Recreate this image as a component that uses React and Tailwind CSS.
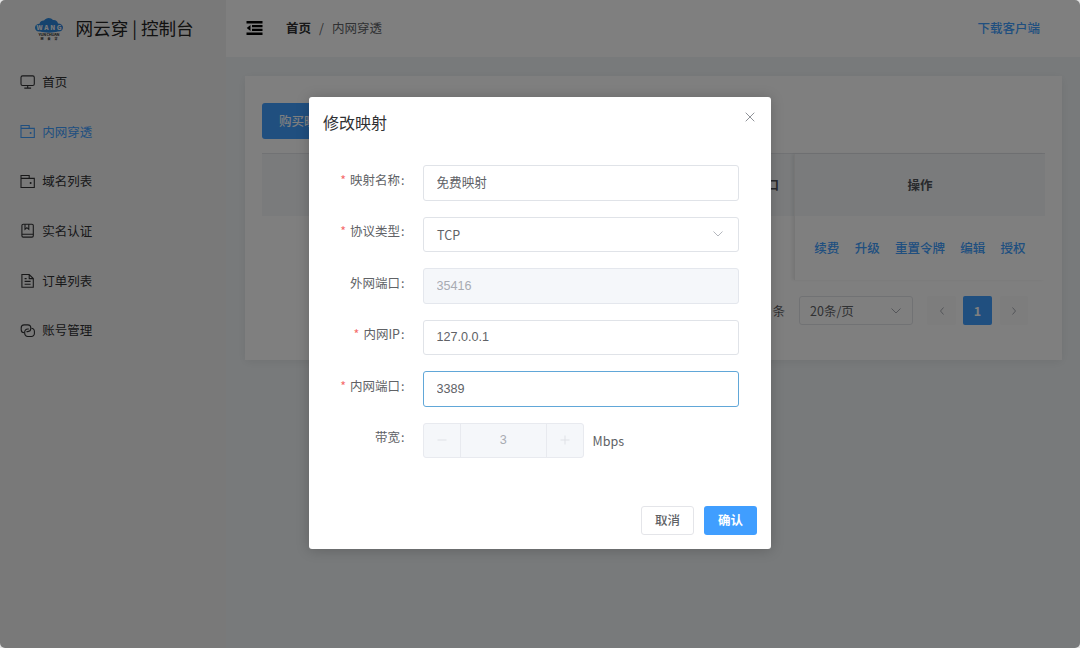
import { useState } from "react";
import clsx from "clsx";

const MENU = [
  { name: "首页", icon: "monitor" },
  { name: "内网穿透", icon: "wallet" },
  { name: "域名列表", icon: "wallet" },
  { name: "实名认证", icon: "notebook" },
  { name: "订单列表", icon: "document" },
  { name: "账号管理", icon: "link" },
];

const ICONS = {
  monitor: (
    <>
      <rect x="1" y="1.9" width="13.3" height="9.6" rx="1.6" />
      <path d="M7.7 11.500v2.200M4.300 14.100h6.800" />
    </>
  ),
  wallet: (
    <>
      <path d="M1 13.500V1.500h8.200v2.900M1 4.400h13.300v9.100H1z" />
      <circle cx="10.600" cy="9" r="1" fill="currentColor" stroke="none" />
    </>
  ),
  notebook: (
    <>
      <rect x="1.900" y="1.300" width="11.400" height="12.800" rx="1.300" />
      <path d="M1.900 11.300h11.400M5 1.300v5l1.900-1.600 1.900 1.600v-5" />
    </>
  ),
  document: (
    <>
      <path d="M9.200 1.500H1.900v12.800h11.400V5.600zM9.200 1.500v4.100h4.100" />
      <path d="M4.600 5.600h2M4.600 8.400h6M4.600 11.200h6" />
    </>
  ),
  link: (
    <>
      <path d="M4.400 9.700H4.200A3 3 0 0 1 1.200 6.700V4.900a3 3 0 0 1 3-3h3.600a3 3 0 0 1 3 3v.7a3 3 0 0 1-3 3H6.500" />
      <path d="M11.400 5.300a3 3 0 0 1 3 3v2.200a3 3 0 0 1-3 3H7.700a3 3 0 0 1-3-3V9a3 3 0 0 1 3-3h1.100" />
    </>
  ),
};

function MenuIcon({ name }) {
  return (
    <svg className="w-4 h-4 shrink-0" viewBox="0 0 16 16" fill="none" stroke="currentColor" strokeWidth="1.1">
      {ICONS[name]}
    </svg>
  );
}

function Chevron({ d = "M1.500 3.500l4.500 4.500 4.500-4.500", className }) {
  return (
    <svg className={clsx("w-3 h-3 shrink-0", className)} viewBox="0 0 12 12" fill="none" stroke="currentColor">
      <path d={d} />
    </svg>
  );
}

function Logo() {
  return (
    <svg className="w-[30px] h-6" viewBox="0 0 30 24">
      <path
        fill="#2b86dd"
        d="M6 14.500C2.500 15 1 12.500 1 10.500C1 8 3.500 6.800 5.500 6.800C6 4 8.500 3.300 10 3.500C12 .2 17 .2 19 3C21.500 2.500 23.500 4 24 6.500C27 6.500 29 8.300 29 10.500C29 13 27 14.800 24 14.500C19 16 11 16 6 14.500Z"
      />
      <text x="15" y="12.800" textAnchor="middle" textLength="25" fontSize="6.500" fontWeight="900" fill="#f4f4f4">WANG</text>
      <text x="15" y="18.800" textAnchor="middle" textLength="21" fontSize="4" fontWeight="700" fill="#333">YUN CHUAN</text>
      <text x="15" y="23" textAnchor="middle" textLength="17" fontSize="3" fontWeight="700" fill="#222">网 云 穿</text>
    </svg>
  );
}

function Sidebar({ active }) {
  return (
    <aside className="w-[226px] shrink-0 bg-[#f3f3f3]">
      <div className="h-[57px] flex items-center pl-[34px] gap-[11.500px] text-[#222]">
        <Logo />
        <span className="text-[17.600px] whitespace-nowrap">网云穿 | 控制台</span>
      </div>
      <nav className="pt-[0.400px]">
        {MENU.map((item) => (
          <div
            key={item.name}
            className={clsx(
              "h-[49.700px] flex items-center pl-5 gap-[6.300px]",
              item.name === active ? "text-[#409eff]" : "text-[#303133]"
            )}
          >
            <MenuIcon name={item.icon} />
            <span>{item.name}</span>
          </div>
        ))}
      </nav>
    </aside>
  );
}

function Header() {
  return (
    <header className="h-[57px] shrink-0 bg-white flex items-center pl-5 pr-10">
      <svg className="w-[17px] h-[14px] mb-px" viewBox="0 0 17 14" fill="#000">
        <path d="M.5 0h16v2.500H.5zM6 3.900h10.500v2.400H6zM6 7.700h10.500v2.400H6zM.5 11.500h16V14H.5zM4.500 4v6L.7 7z" />
      </svg>
      <span className="ml-[23px] font-bold text-[#303133]">首页</span>
      <span className="mx-2 text-[#606266]">/</span>
      <span className="text-[#606266]">内网穿透</span>
      <span className="ml-auto text-[#409eff] font-medium">下载客户端</span>
    </header>
  );
}

function MappingTable() {
  return (
    <div className="mt-[14px] mr-[17px] flex border-t border-[#e2e4e8]">
      <div className="flex-1 min-w-0">
        <div className="h-[62px] bg-[#f4f7f9] flex items-center justify-end pr-[15px] font-bold text-[#505458]">内网端口</div>
        <div className="h-[64px]" />
      </div>
      <div className="w-[251px] border-l border-[#ececec] shadow-[-2px_0_3px_rgba(0,0,0,0.07)]">
        <div className="h-[62px] bg-[#f4f7f9] flex items-center justify-center font-bold text-[#505458]">操作</div>
        <div className="h-[64px] flex items-center justify-center gap-[15.300px] pt-px text-[#409eff] font-medium">
          <span>续费</span>
          <span>升级</span>
          <span>重置令牌</span>
          <span>编辑</span>
          <span>授权</span>
        </div>
      </div>
    </div>
  );
}

function Pagination() {
  return (
    <div className="mt-4 pr-[34px] flex items-center justify-end text-[#606266]">
      <span className="pt-px">共 1 条</span>
      <div className="ml-[14px] w-[114px] h-[29px] rounded-[3px] border border-[#e2e4e9] flex items-center justify-between pl-[10px] pr-[10px]">
        <span className="pt-px">20条/页</span>
        <Chevron className="text-[#a8abb2]" />
      </div>
      <div className="ml-[14px] w-[29px] h-[29px] rounded-[2px] bg-[#fafafb] flex items-center justify-center text-[#a8abb2]">
        <Chevron d="M7.500 2.500L4.500 6l3 3.500" />
      </div>
      <div className="ml-[7px] w-[29px] h-[29px] rounded-[2px] bg-[#409eff] flex items-center justify-center pt-px text-white font-bold">1</div>
      <div className="ml-2 w-[28px] h-[29px] rounded-[2px] bg-[#fafafb] flex items-center justify-center text-[#a8abb2]">
        <Chevron d="M4.500 2.500l3 3.500-3 3.500" />
      </div>
    </div>
  );
}

function FormRow({ label, required, children }) {
  return (
    <div className="flex h-[35.500px] mb-4">
      <div className="w-[97px] h-[30px] shrink-0 flex items-center justify-end whitespace-nowrap">
        {required && <span className="text-[#f56c6c] mr-1">*</span>}
        <span>{label}</span>
        <span className="w-[6px] pl-px">:</span>
      </div>
      <div className="ml-[17px] flex-1 min-w-0 flex">{children}</div>
    </div>
  );
}

const inputClass =
  "w-full h-full rounded-[3px] border px-[12.500px] text-[12.600px] outline-none font-['Liberation_Sans','Noto_Sans_CJK_SC',sans-serif]";

function EditDialog() {
  const [form, setForm] = useState({ name: "免费映射", ip: "127.0.0.1", port: "3389" });
  const update = (key) => (e) => setForm({ ...form, [key]: e.target.value });

  return (
    <div className="w-[462px] h-[452px] mt-[97px] rounded-[3px] bg-white shadow-[0_1px_14px_rgba(0,0,0,0.2)] flex flex-col text-[#606266]">
      <div className="h-[68px] shrink-0 pl-[14px] pr-[15px] pt-[14px] flex items-start justify-between">
        <span className="text-[16px] leading-[23px] text-[#303133]">修改映射</span>
        <svg className="w-3 h-3" viewBox="0 0 12 12" fill="none" stroke="#909399">
          <path d="M1.700 1.700l8.600 8.600M10.300 1.700l-8.600 8.600" />
        </svg>
      </div>

      <div className="flex-1 pr-8">
        <FormRow label="映射名称" required>
          <input className={clsx(inputClass, "pb-0.5 border-[#e0e3e8]")} value={form.name} onChange={update("name")} />
        </FormRow>
        <FormRow label="协议类型" required>
          <div className="w-full h-full rounded-[3px] border border-[#e0e3e8] pl-[13px] pr-[14px] flex items-center justify-between">
            <span className="pt-0.5">TCP</span>
            <Chevron className="text-[#b4b7bd]" />
          </div>
        </FormRow>
        <FormRow label="外网端口">
          <input className={clsx(inputClass, "border-[#e4e7ed] bg-[#f5f7fa] text-[#a8abb2]")} value="35416" disabled readOnly />
        </FormRow>
        <FormRow label="内网IP" required>
          <input className={clsx(inputClass, "border-[#e0e3e8]")} value={form.ip} onChange={update("ip")} />
        </FormRow>
        <FormRow label="内网端口" required>
          <input className={clsx(inputClass, "border-[#61a7d8]")} value={form.port} onChange={update("port")} />
        </FormRow>
        <FormRow label="带宽">
          <div className="w-[160.500px] h-full flex rounded-[3px] border border-[#e8eaef] bg-[#f5f7fa] text-[#a8abb2]">
            <div className="w-[37px] border-r border-[#e8eaef] flex items-center justify-center">
              <Chevron d="M1.500 6h9" className="text-[#dfe1e6]" />
            </div>
            <div className="flex-1 flex items-center justify-center text-[12.600px] pt-px font-['Liberation_Sans',sans-serif]">3</div>
            <div className="w-[37px] border-l border-[#e8eaef] flex items-center justify-center">
              <Chevron d="M1.500 6h9M6 1.500v9" className="text-[#dfe1e6]" />
            </div>
          </div>
          <span className="ml-[9px] leading-9">Mbps</span>
        </FormRow>
      </div>

      <div className="shrink-0 flex justify-end gap-[10px] pr-[14px] pb-[14px]">
        <button className="w-[53px] h-[29px] rounded-[3px] border border-[#e4e5e9] font-medium">取消</button>
        <button className="w-[53px] h-[29px] rounded-[3px] bg-[#409eff] text-white font-bold">确认</button>
      </div>
    </div>
  );
}

export default function App() {
  return (
    <div className="bg-[#e4e4e4]">
      <div className="relative w-[1080px] h-[648px] rounded-[5px] overflow-hidden flex text-[12.500px] font-['Noto_Sans_CJK_SC',sans-serif]">
        <Sidebar active="内网穿透" />
        <div className="flex-1 min-w-0 flex flex-col bg-[#f1f5f7]">
          <Header />
          <main className="flex-1 pt-[19px] pl-[19px] pr-[18px]">
            <section className="h-[284px] bg-white pt-[27px] pl-[17px] shadow-[0_2px_9px_rgba(0,0,0,0.07)]">
              <button className="h-9 w-[84px] rounded-[3px] bg-[#409eff] text-white font-medium">购买映射</button>
              <MappingTable />
              <Pagination />
            </section>
          </main>
        </div>

        <div className="absolute inset-0 bg-black/50 flex items-start justify-center">
          <EditDialog />
        </div>
      </div>
    </div>
  );
}
